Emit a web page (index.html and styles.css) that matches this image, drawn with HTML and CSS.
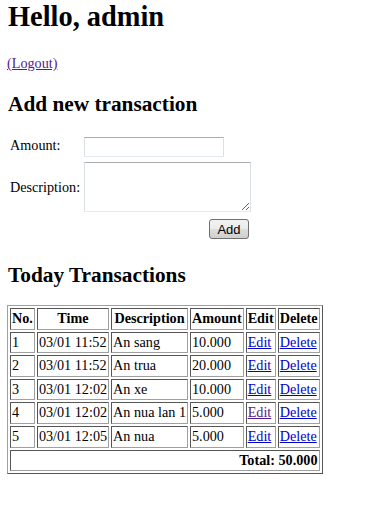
FILE: index.html
```html
<!DOCTYPE html>
<html>
<head>
<meta charset="utf-8">
<link rel="stylesheet" href="styles.css">
</head>
<body>
<h1 class="title">Hello, admin</h1>
<p class="logout-line"><a class="visited" href="#">(Logout)</a></p>
<h2 class="section add-title">Add new transaction</h2>
<form class="add-form">
  <label class="label label-amount" for="amount">Amount:</label>
  <input class="amount" id="amount" type="text">
  <label class="label" for="desc">Description:</label>
  <textarea class="desc" id="desc"></textarea>
  <div class="btn-cell"><button class="add-btn" type="button">Add</button></div>
</form>
<h2 class="section tx-title">Today Transactions</h2>
<table class="tx">
<tr><th>No.</th><th>Time</th><th>Description</th><th>Amount</th><th>Edit</th><th>Delete</th></tr>
<tr><td>1</td><td>03/01 11:52</td><td>An sang</td><td>10.000</td><td><a href="#">Edit</a></td><td><a href="#">Delete</a></td></tr>
<tr><td>2</td><td>03/01 11:52</td><td>An trua</td><td>20.000</td><td><a href="#">Edit</a></td><td><a href="#">Delete</a></td></tr>
<tr><td>3</td><td>03/01 12:02</td><td>An xe</td><td>10.000</td><td><a href="#">Edit</a></td><td><a href="#">Delete</a></td></tr>
<tr><td>4</td><td>03/01 12:02</td><td>An nua lan 1</td><td>5.000</td><td><a class="visited" href="#">Edit</a></td><td><a href="#">Delete</a></td></tr>
<tr><td>5</td><td>03/01 12:05</td><td>An nua</td><td>5.000</td><td><a href="#">Edit</a></td><td><a href="#">Delete</a></td></tr>
<tr><th class="total" colspan="6">Total: 50.000</th></tr>
</table>
</body>
</html>
```
FILE: styles.css
```css
body {
  margin: 1px 7px 7px 7px;
  font-family: "Liberation Serif", "Times New Roman", serif;
  font-size: 14.2px;
  color: #000;
  background: #fff;
}
a { color: #0000cc; }
a.visited { color: #551a8b; }
.title {
  font-size: 28.4px;
  line-height: 32px;
  margin: 0 0 22px 1px;
  font-weight: bold;
}
.logout-line {
  margin: 0 0 20px 0;
  line-height: 17px;
}
.section {
  font-size: 21.3px;
  line-height: 24px;
  font-weight: bold;
  margin: 0 0 0 1px;
}
.add-title { margin-bottom: 21px; }
.tx-title { margin-bottom: 18px; }
.add-form {
  display: grid;
  grid-template-columns: 74px auto;
  justify-content: start;
  align-items: center;
  row-gap: 5px;
  margin: 0 0 24px 3px;
}
.label {
  line-height: 17px;
}
.label-amount { position: relative; top: -2px; }
.amount {
  width: 140px;
  height: 20px;
  box-sizing: border-box;
  border: 1px solid #dbdfe6;
  border-top-color: #abadb3;
  border-bottom-color: #e3e9ef;
  margin: 0;
  padding: 0 2px;
}
.desc {
  width: 167px;
  height: 50px;
  box-sizing: border-box;
  border: 1px solid #dbdfe6;
  border-top-color: #abadb3;
  border-bottom-color: #e3e9ef;
  margin: 0;
  padding: 2px;
  resize: both;
  display: block;
}
.btn-cell {
  grid-column: 2;
  display: flex;
  justify-content: flex-end;
  padding-top: 2px;
  margin-right: 2px;
}
.add-btn {
  font-family: "Liberation Sans", Arial, sans-serif;
  font-size: 13px;
  color: #000;
  width: 40px;
  height: 20px;
  padding: 0;
  border: 1px solid #707070;
  border-radius: 3px;
  background: linear-gradient(#f2f2f2 0%, #ebebeb 50%, #dddddd 51%, #cfcfcf 100%);
}
.tx {
  border: 1px solid;
  border-color: #a0a0a0 #555 #555 #a0a0a0;
  border-spacing: 2px;
}
.tx th, .tx td {
  border: 1px solid;
  border-color: #555 #a0a0a0 #a0a0a0 #555;
  padding: 1px;
  line-height: 17.6px;
  white-space: nowrap;
}
.tx th { font-weight: bold; text-align: center; }
.tx td { text-align: left; }
.tx th.total { text-align: right; }
```
